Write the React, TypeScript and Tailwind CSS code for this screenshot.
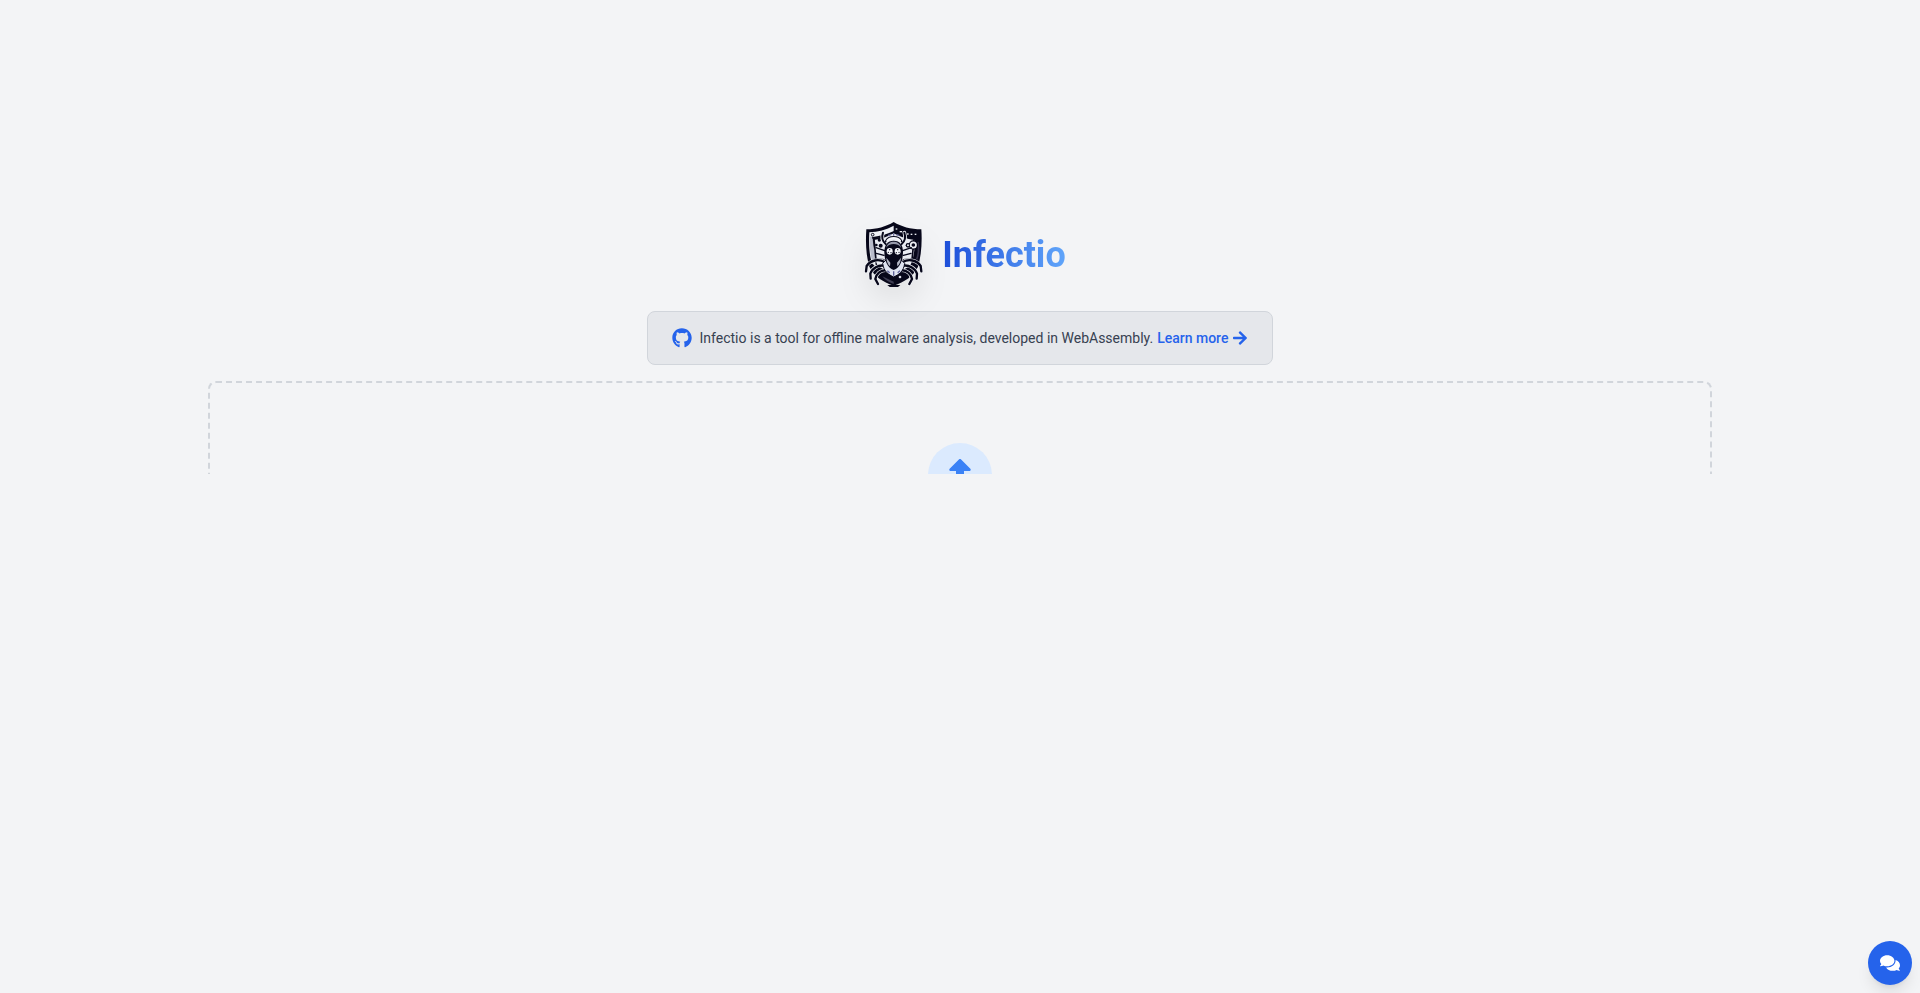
import { useRef } from "react";
import { FaArrowRight, FaComments, FaGithub, FaUpload } from "react-icons/fa";

const HORNS =
  "M99 68C94 83 96 93 107 102M163 68C168 83 166 93 155 102";
const CLAWS =
  "M104 156C86 146 62 150 50 168L48 184M158 156C176 146 200 150 212 168L214 184M106 168C85 162 66 176 61 191L62 206M156 168C177 162 196 176 201 191L200 206M110 181C91 179 78 193 76 207L84 222M152 181C171 179 184 193 186 207L178 222";

function Logo() {
  return (
    <svg
      viewBox="12 15 240 240"
      className="h-20 w-20 drop-shadow-[0_16px_14px_rgba(0,0,0,0.07)]"
      role="img"
      aria-label="Infectio logo"
    >
      {/* shield */}
      <path
        d="M131 36C108 50 80 58 49 58C46 100 49 140 58 170C72 198 98 216 131 227C164 216 190 198 204 170C213 140 217 100 214 58C182 58 154 50 131 36Z"
        fill="#07071a"
      />
      <path
        d="M131 47C109 59 84 66 58 67C56 104 58 135 66 160L78 172L66 85C90 82 112 76 131 66Z"
        fill="#eef0f5"
      />
      <path d="M72 90C94 87 114 80 131 70C148 80 170 87 194 90C195 120 190 150 180 168L131 196L84 168C74 150 70 120 72 90Z" fill="#e9ebf2" />
      <path d="M60 80L70 78L68 90L76 148L66 152C60 130 58 104 60 80Z" fill="#b9bccb" />
      <path d="M66 84C92 80 113 75 131 66C150 76 172 83 198 86" fill="none" stroke="#07071a" strokeWidth="5" />
      <path d="M72 88L78 150M192 88L186 150" stroke="#07071a" strokeWidth="5" fill="none" />
      <path d="M204 96C208 122 205 136 200 148" stroke="#36344c" strokeWidth="5" fill="none" />
      <circle cx="68" cy="74" r="4" fill="none" stroke="#07071a" strokeWidth="3" />
      <g fill="#eef0f5">
        <rect x="137" y="55" width="5" height="4" />
        <rect x="149" y="63" width="7" height="4" />
        <rect x="171" y="70" width="5" height="4" />
        <rect x="182" y="71" width="5" height="4" />
        <rect x="194" y="71" width="5" height="4" />
      </g>
      {/* lower tip */}
      <path d="M97 199L131 215V222C116 217 105 210 97 199Z" fill="#3f3e54" />
      <circle cx="150" cy="201" r="4" fill="#d8dae5" />
      <path d="M112 225H151L144 231H119Z" fill="#07071a" />
      {/* gears and dots */}
      <g fill="#07071a">
        <circle cx="88" cy="90" r="5" />
        <circle cx="79" cy="105" r="4" />
        <circle cx="92" cy="107" r="6" />
        <circle cx="174" cy="106" r="7" />
        <circle cx="190" cy="105" r="14" />
      </g>
      <circle cx="190" cy="105" r="8" fill="#07071a" stroke="#eef0f5" strokeWidth="5" />
      <circle cx="174" cy="106" r="3" fill="#eef0f5" />
      {/* horns and collar */}
      <g fill="none" strokeLinecap="round">
        <path d={HORNS} stroke="#eef0f5" strokeWidth="11" />
        <path d={HORNS} stroke="#07071a" strokeWidth="6" />
        <path d="M107 94C115 76 147 76 155 94" stroke="#07071a" strokeWidth="5" />
        <path d="M112 92C120 81 142 81 150 92" stroke="#f4f5fa" strokeWidth="6" />
      </g>
      <path d="M114 77L123 74M139 74L148 77M131 70V77" stroke="#6c6d9d" strokeWidth="4" />
      {/* side legs */}
      <g fill="none" stroke="#07071a" strokeLinecap="round" strokeWidth="4">
        <path d="M104 122L78 113M102 136L79 130M102 149L76 146M158 122L184 113M160 136L183 130M160 149L186 146" />
      </g>
      {/* claws, light edge first */}
      <g fill="none" strokeLinecap="round">
        <path d={CLAWS} stroke="#eef0f5" strokeWidth="11" />
        <path d={CLAWS} stroke="#07071a" strokeWidth="7" />
      </g>
      {/* body */}
      <path d="M98 160C101 185 116 194 131 201C146 194 161 185 164 160L154 150H108Z" fill="#dfe3f1" stroke="#07071a" strokeWidth="3" />
      <path d="M131 92C112 92 103 106 103 126C103 150 112 174 131 180C150 174 159 150 159 126C159 106 150 92 131 92Z" fill="#07071a" />
      <path d="M112 182L119 188M131 184V197M150 182L143 188" stroke="#5d6098" strokeWidth="4" />
      <path d="M109 113C111 100 121 95 131 95C141 95 151 100 153 113C147 104 140 102 131 102C122 102 115 104 109 113Z" fill="#9699ab" />
      <path d="M109 143C110 156 114 164 120 169L121 158ZM153 143C152 156 148 164 142 169L141 158Z" fill="#b4b7c6" />
      {/* eyes */}
      <g fill="#f4f5fa">
        <ellipse cx="119" cy="124" rx="9" ry="10" />
        <ellipse cx="143" cy="124" rx="9" ry="10" />
      </g>
      <g fill="#07071a">
        <circle cx="119" cy="119" r="2" />
        <circle cx="115" cy="127" r="2" />
        <circle cx="123" cy="128" r="2" />
        <circle cx="143" cy="119" r="2" />
        <circle cx="139" cy="128" r="2" />
        <circle cx="147" cy="127" r="2" />
      </g>
    </svg>
  );
}

function Banner() {
  return (
    <div className="flex items-center rounded-lg border border-[#d1d5db] bg-[#e5e7eb] px-6 py-4 text-sm text-[#374151]">
      <FaGithub className="mr-2 h-5 w-5 text-[#2563eb]" />
      <p>
        Infectio is a tool for offline malware analysis, developed in
        WebAssembly.
      </p>
      <a
        href="#learn-more"
        className="ml-1 flex items-center gap-1 font-medium text-[#2563eb] hover:underline"
      >
        Learn more
        <FaArrowRight size={16} />
      </a>
    </div>
  );
}

function Dropzone() {
  const inputRef = useRef<HTMLInputElement>(null);

  return (
    <div className="max-h-[93px] w-full overflow-hidden">
      <button
        type="button"
        aria-label="Upload file"
        onClick={() => inputRef.current?.click()}
        className="flex h-72 w-full cursor-pointer flex-col items-center rounded-lg border-2 border-dashed border-[#d1d5db] pt-[60px]"
      >
        <span className="rounded-full bg-[#dbeafe] p-4">
          <FaUpload className="h-8 w-8 text-[#3b82f6]" />
        </span>
      </button>
      <input ref={inputRef} type="file" aria-label="File" className="hidden" />
    </div>
  );
}

export default function App() {
  return (
    <div className="min-h-screen bg-[#f3f4f6] font-[Roboto,sans-serif]">
      <main className="mx-auto flex max-w-screen-2xl flex-col items-center gap-4 px-4 pt-[215px]">
        <header className="flex items-center gap-2">
          <Logo />
          <h1 className="bg-linear-to-r/srgb from-[#1d4ed8] to-[#60a5fa] bg-clip-text text-4xl font-bold text-transparent">
            Infectio
          </h1>
        </header>
        <Banner />
        <Dropzone />
      </main>
      <button
        type="button"
        aria-label="Open chat"
        className="fixed right-2 bottom-2 flex h-11 w-11 cursor-pointer items-center justify-center rounded-full bg-[#2563eb] text-white shadow-lg"
      >
        <FaComments size={20} />
      </button>
    </div>
  );
}
